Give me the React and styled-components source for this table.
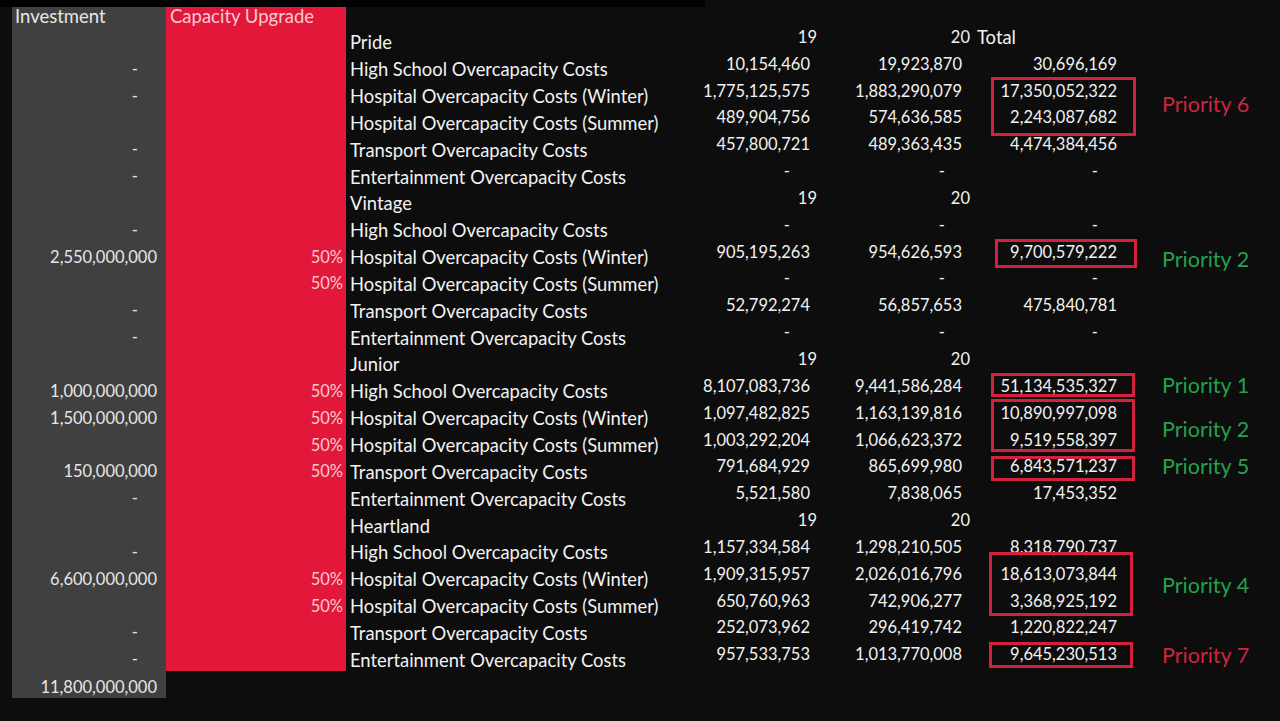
import React from 'react'
import styled, { createGlobalStyle } from 'styled-components'

const GlobalStyle = createGlobalStyle`
  html, body {
    margin: 0;
    padding: 0;
    background: #0d0d0d;
  }
  body {
    font-family: Lato, "Open Sans", sans-serif;
  }
`

const Page = styled.div`
  width: 1280px;
  height: 721px;
  display: flex;
  flex-direction: column;
  background: #0d0d0d;
  overflow: hidden;
`

const TopStrip = styled.div`
  width: 705px;
  height: 7px;
  background: #000;
  flex: none;
`

const Sheet = styled.div`
  display: grid;
  grid-template-columns: 12px 154px 180px 354px 117px 154px 169px 1fr;
  grid-template-rows: 19.5px repeat(24, 26.85px) 27.5px;
`

const Band = styled.div`
  grid-column: ${p => p.$col};
  grid-row: 1 / ${p => p.$end};
  background: ${p => p.$color};
  z-index: 0;
`

const Cell = styled.div`
  grid-row: ${p => p.$row};
  grid-column: ${p => p.$col};
  display: flex;
  align-items: flex-end;
  justify-content: ${p => (p.$left ? 'flex-start' : 'flex-end')};
  padding: 0 ${p => p.$pr || 0}px ${p => (p.$num ? 6.5 : 1.5)}px ${p => p.$pl || 0}px;
  font-size: 16.5px;
  line-height: 20px;
  color: ${p => p.$color || '#f2f2f2'};
  white-space: nowrap;
  z-index: 1;
`

const LabelCell = styled(Cell)`
  font-size: 18.4px;
  padding-bottom: 1px;
`

const TotalHead = styled(LabelCell)`
  padding-bottom: 6px;
`

const HeadCell = styled(Cell)`
  font-size: 18.5px;
  padding-bottom: 0.5px;
`

const PinkCell = styled(Cell)`
  color: #f7ccd3;
`

const UpgradeHead = styled(HeadCell)`
  color: #f7ccd3;
`

const Box = styled.div`
  grid-column: 7;
  grid-row: ${p => p.$row} / span ${p => p.$span};
  border: 3px solid #d3203f;
  margin: ${p => p.$top}px ${p => p.$right}px ${p => p.$bottom}px ${p => p.$left}px;
  z-index: 2;
`

const Priority = styled.div`
  grid-column: 8;
  grid-row: ${p => p.$row} / span ${p => p.$span};
  align-self: center;
  padding-left: 22px;
  padding-top: ${p => (p.$nudge > 0 ? p.$nudge * 2 : 0)}px;
  padding-bottom: ${p => (p.$nudge < 0 ? -p.$nudge * 2 : 0)}px;
  font-size: 21.5px;
  line-height: 26px;
  color: ${p => (p.$tone === 'red' ? '#cf2440' : '#22a24c')};
  white-space: nowrap;
  z-index: 1;
`

const LABELS = [
  'High School Overcapacity Costs',
  'Hospital Overcapacity Costs (Winter)',
  'Hospital Overcapacity Costs (Summer)',
  'Transport Overcapacity Costs',
  'Entertainment Overcapacity Costs',
]

const sections = [
  {
    name: 'Pride',
    total: true,
    rows: [
      ['-', '', '10,154,460', '19,923,870', '30,696,169'],
      ['-', '', '1,775,125,575', '1,883,290,079', '17,350,052,322'],
      ['', '', '489,904,756', '574,636,585', '2,243,087,682'],
      ['-', '', '457,800,721', '489,363,435', '4,474,384,456'],
      ['-', '', '-', '-', '-'],
    ],
  },
  {
    name: 'Vintage',
    rows: [
      ['-', '', '-', '-', '-'],
      ['2,550,000,000', '50%', '905,195,263', '954,626,593', '9,700,579,222'],
      ['', '50%', '-', '-', '-'],
      ['-', '', '52,792,274', '56,857,653', '475,840,781'],
      ['-', '', '-', '-', '-'],
    ],
  },
  {
    name: 'Junior',
    rows: [
      ['1,000,000,000', '50%', '8,107,083,736', '9,441,586,284', '51,134,535,327'],
      ['1,500,000,000', '50%', '1,097,482,825', '1,163,139,816', '10,890,997,098'],
      ['', '50%', '1,003,292,204', '1,066,623,372', '9,519,558,397'],
      ['150,000,000', '50%', '791,684,929', '865,699,980', '6,843,571,237'],
      ['-', '', '5,521,580', '7,838,065', '17,453,352'],
    ],
  },
  {
    name: 'Heartland',
    rows: [
      ['-', '', '1,157,334,584', '1,298,210,505', '8,318,790,737'],
      ['6,600,000,000', '50%', '1,909,315,957', '2,026,016,796', '18,613,073,844'],
      ['', '50%', '650,760,963', '742,906,277', '3,368,925,192'],
      ['-', '', '252,073,962', '296,419,742', '1,220,822,247'],
      ['-', '', '957,533,753', '1,013,770,008', '9,645,230,513'],
    ],
  },
]

// grid row = data index + 2 (row 1 is the header, row 26 the total)
const boxes = [
  { row: 4, span: 2, top: -3.5, bottom: -2, left: 20, right: 4 },
  { row: 10, span: 1, top: -2, bottom: 0, left: 24, right: 3 },
  { row: 15, span: 1, top: -2.5, bottom: 5, left: 20, right: 5 },
  { row: 16, span: 2, top: -3.5, bottom: 4.5, left: 20, right: 5 },
  { row: 18, span: 1, top: -0.5, bottom: 2, left: 20, right: 5 },
  { row: 22, span: 2, top: -11, bottom: 1, left: 18, right: 7 },
  { row: 25, span: 1, top: -2, bottom: 3, left: 18, right: 7 },
]

const priorities = [
  { row: 4, span: 2, text: 'Priority 6', tone: 'red', nudge: -3 },
  { row: 10, span: 1, text: 'Priority 2', tone: 'green', nudge: 4 },
  { row: 15, span: 1, text: 'Priority 1', tone: 'green', nudge: -4 },
  { row: 16, span: 2, text: 'Priority 2', tone: 'green', nudge: 0 },
  { row: 18, span: 1, text: 'Priority 5', tone: 'green', nudge: -3 },
  { row: 22, span: 2, text: 'Priority 4', tone: 'green', nudge: -5 },
  { row: 25, span: 1, text: 'Priority 7', tone: 'red', nudge: -2.5 },
]

const dashPad = { inv: 28, c19: 27, c20: 26, total: 42 }
const valuePad = { inv: 9, c19: 7, c20: 9, total: 23 }
const pad = (key, v) => (v === '-' ? dashPad[key] : valuePad[key])

const renderSection = (section, index) => {
  const base = 2 + index * 6
  const cells = [
    <LabelCell key="name" $row={base} $col={4} $left $pl={4}>{section.name}</LabelCell>,
    <Cell key="h19" $row={base} $col={5} $num>19</Cell>,
    <Cell key="h20" $row={base} $col={6} $num $pr={1}>20</Cell>,
  ]
  if (section.total) {
    cells.push(<TotalHead key="ht" $row={base} $col={7} $left $pl={6}>Total</TotalHead>)
  }
  section.rows.forEach(([inv, upg, v19, v20, tot], i) => {
    const row = base + 1 + i
    cells.push(
      <Cell key={`i${i}`} $row={row} $col={2} $pr={pad('inv', inv)} $color="#e6e6e6">{inv}</Cell>,
      <PinkCell key={`u${i}`} $row={row} $col={3} $pr={3}>{upg}</PinkCell>,
      <LabelCell key={`l${i}`} $row={row} $col={4} $left $pl={4}>{LABELS[i]}</LabelCell>,
      <Cell key={`a${i}`} $row={row} $col={5} $num $pr={pad('c19', v19)}>{v19}</Cell>,
      <Cell key={`b${i}`} $row={row} $col={6} $num $pr={pad('c20', v20)}>{v20}</Cell>,
      <Cell key={`t${i}`} $row={row} $col={7} $num $pr={pad('total', tot)}>{tot}</Cell>
    )
  })
  return <React.Fragment key={section.name}>{cells}</React.Fragment>
}

export default function App() {
  return (
    <Page>
      <GlobalStyle />
      <TopStrip />
      <Sheet>
        <Band $col={2} $end={27} $color="#404040" />
        <Band $col={3} $end={26} $color="#e2173a" />
        <HeadCell $row={1} $col={2} $left $pl={3} $color="#e6e6e6">Investment</HeadCell>
        <UpgradeHead $row={1} $col={3} $left $pl={4}>Capacity Upgrade</UpgradeHead>
        {sections.map(renderSection)}
        <Cell $row={26} $col={2} $pr={9} $color="#e6e6e6">11,800,000,000</Cell>
        {boxes.map((b, i) => (
          <Box key={i} $row={b.row} $span={b.span} $top={b.top} $bottom={b.bottom} $left={b.left} $right={b.right} />
        ))}
        {priorities.map((p, i) => (
          <Priority key={i} $row={p.row} $span={p.span} $tone={p.tone} $nudge={p.nudge}>{p.text}</Priority>
        ))}
      </Sheet>
    </Page>
  )
}
